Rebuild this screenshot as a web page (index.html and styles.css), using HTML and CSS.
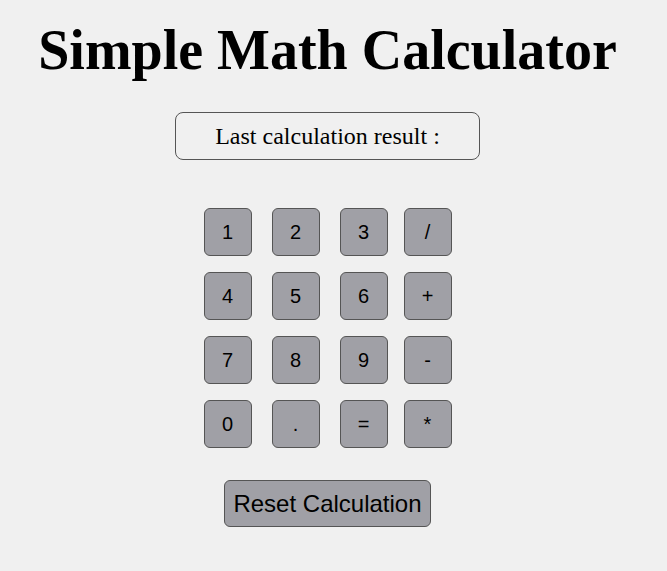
FILE: index.html
```html
<!DOCTYPE html>
<html>
<head>
<meta charset="utf-8">
<link rel="stylesheet" href="styles.css">
</head>
<body>
<div class="page">
  <h1 class="title">Simple Math Calculator</h1>
  <div class="result">Last calculation result :</div>
  <div class="keys">
    <button class="key">1</button><button class="key">2</button><button class="key">3</button><button class="key op">/</button>
    <button class="key">4</button><button class="key">5</button><button class="key">6</button><button class="key op">+</button>
    <button class="key">7</button><button class="key">8</button><button class="key">9</button><button class="key op">-</button>
    <button class="key">0</button><button class="key">.</button><button class="key">=</button><button class="key op">*</button>
  </div>
  <button class="reset">Reset Calculation</button>
</div>
</body>
</html>
```
FILE: styles.css
```css
html, body {
  margin: 0;
  background: #f0f0f0;
}
.page {
  margin: 0 12px 0 0;
  display: flex;
  flex-direction: column;
  align-items: center;
  font-family: "Liberation Serif", serif;
  color: #000;
}
.title {
  font-size: 56px;
  font-weight: bold;
  margin: 18px 0 0;
  line-height: 64px;
}
.result {
  box-sizing: border-box;
  margin-top: 30px;
  width: 305px;
  height: 48px;
  border: 1px solid #555;
  border-radius: 8px;
  font-size: 24px;
  display: flex;
  align-items: center;
  justify-content: center;
}
.keys {
  margin-top: 48px;
  display: grid;
  grid-template-columns: 48px 48px 48px 44px;
  column-gap: 20px;
  row-gap: 16px;
}
.key {
  box-sizing: border-box;
  width: 48px;
  height: 48px;
  padding: 0;
  background: #a0a0a6;
  border: 1px solid #555;
  border-radius: 6px;
  font-family: "Liberation Sans", Arial, sans-serif;
  font-size: 20px;
  color: #000;
}
.key.op {
  margin-left: -4px;
}
.reset {
  box-sizing: border-box;
  margin-top: 32px;
  width: 207px;
  height: 47px;
  padding: 0;
  background: #a0a0a6;
  border: 1px solid #555;
  border-radius: 6px;
  font-family: "Liberation Sans", Arial, sans-serif;
  font-size: 24px;
  color: #000;
}
```
